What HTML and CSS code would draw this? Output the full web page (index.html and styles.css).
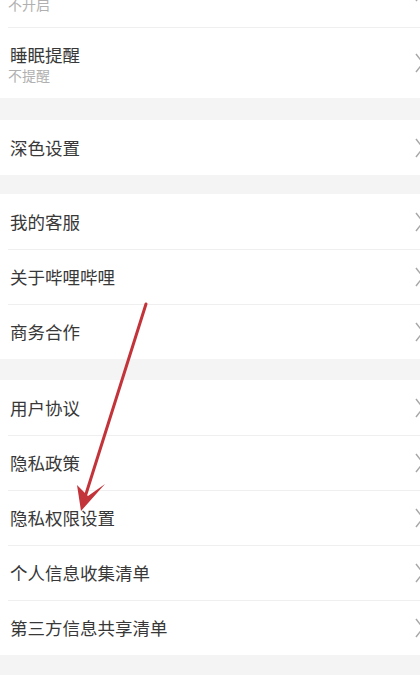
FILE: index.html
```html
<!DOCTYPE html>
<html lang="zh-CN">
<head>
<meta charset="utf-8">
<title>设置</title>
<link rel="stylesheet" href="styles.css">
</head>
<body>
<div class="page">
  <div class="list">
    <section class="group g1">
      <div class="row tall">
        <div class="text"><div class="title">定时关闭</div><div class="sub">不开启</div></div>
        <svg class="chev" viewBox="0 0 10 20"><path d="M1 1 L8 10 L1 19"/></svg>
      </div>
      <div class="row tall">
        <div class="text"><div class="title">睡眠提醒</div><div class="sub">不提醒</div></div>
        <svg class="chev" viewBox="0 0 10 20"><path d="M1 1 L8 10 L1 19"/></svg>
      </div>
    </section>
    <section class="group g2">
      <div class="row"><div class="title">深色设置</div><svg class="chev" viewBox="0 0 10 20"><path d="M1 1 L8 10 L1 19"/></svg></div>
    </section>
    <section class="group g3">
      <div class="row"><div class="title">我的客服</div><svg class="chev" viewBox="0 0 10 20"><path d="M1 1 L8 10 L1 19"/></svg></div>
      <div class="row"><div class="title">关于哔哩哔哩</div><svg class="chev" viewBox="0 0 10 20"><path d="M1 1 L8 10 L1 19"/></svg></div>
      <div class="row"><div class="title">商务合作</div><svg class="chev" viewBox="0 0 10 20"><path d="M1 1 L8 10 L1 19"/></svg></div>
    </section>
    <section class="group g4">
      <div class="row"><div class="title">用户协议</div><svg class="chev" viewBox="0 0 10 20"><path d="M1 1 L8 10 L1 19"/></svg></div>
      <div class="row"><div class="title">隐私政策</div><svg class="chev" viewBox="0 0 10 20"><path d="M1 1 L8 10 L1 19"/></svg></div>
      <div class="row"><div class="title">隐私权限设置</div><svg class="chev" viewBox="0 0 10 20"><path d="M1 1 L8 10 L1 19"/></svg></div>
      <div class="row"><div class="title">个人信息收集清单</div><svg class="chev" viewBox="0 0 10 20"><path d="M1 1 L8 10 L1 19"/></svg></div>
      <div class="row"><div class="title">第三方信息共享清单</div><svg class="chev" viewBox="0 0 10 20"><path d="M1 1 L8 10 L1 19"/></svg></div>
    </section>
    <section class="group g5"></section>
  </div>
  <svg class="arrow" viewBox="0 0 420 684" width="420" height="684">
    <line x1="146" y1="304" x2="86" y2="494" stroke="#c2343a" stroke-width="3" stroke-linecap="round"/>
    <polygon points="81,511 77,485 88,496 105,484" fill="#c2343a"/>
  </svg>
</div>
</body>
</html>
```

FILE: styles.css
```css
html, body {
  margin: 0;
  padding: 0;
}
body {
  background: #f4f4f4;
  font-family: "Noto Sans CJK SC", "Noto Sans", sans-serif;
  overflow: hidden;
}
.page {
  position: relative;
  width: 420px;
  height: 684px;
  overflow: hidden;
}
.list {
  margin-top: -44px;
}
.group {
  background: #ffffff;
}
.g1 { margin-bottom: 22px; }
.g2 { margin-bottom: 19px; }
.g3 { margin-bottom: 21px; }
.g4 { margin-bottom: 20px; }
.g5 { height: 40px; }
.row {
  display: flex;
  align-items: center;
  justify-content: space-between;
  height: 55px;
  margin-left: 8px;
  padding-left: 2px;
  box-sizing: border-box;
  border-top: 1px solid #efefef;
}
.row:first-child {
  border-top: none;
}
.row.tall {
  height: 71px;
}
.title {
  font-size: 17.5px;
  line-height: 22px;
  color: #383838;
}
.tall .text {
  padding-top: 2px;
}
.sub {
  font-size: 14px;
  line-height: 18px;
  color: #b0b0b0;
  margin-left: -2px;
}
.chev {
  width: 10px;
  height: 20px;
  margin-right: -5px;
  fill: none;
  stroke: #a8a8a8;
  stroke-width: 1.5;
}
.arrow {
  position: absolute;
  left: 0;
  top: 0;
  pointer-events: none;
}
```
